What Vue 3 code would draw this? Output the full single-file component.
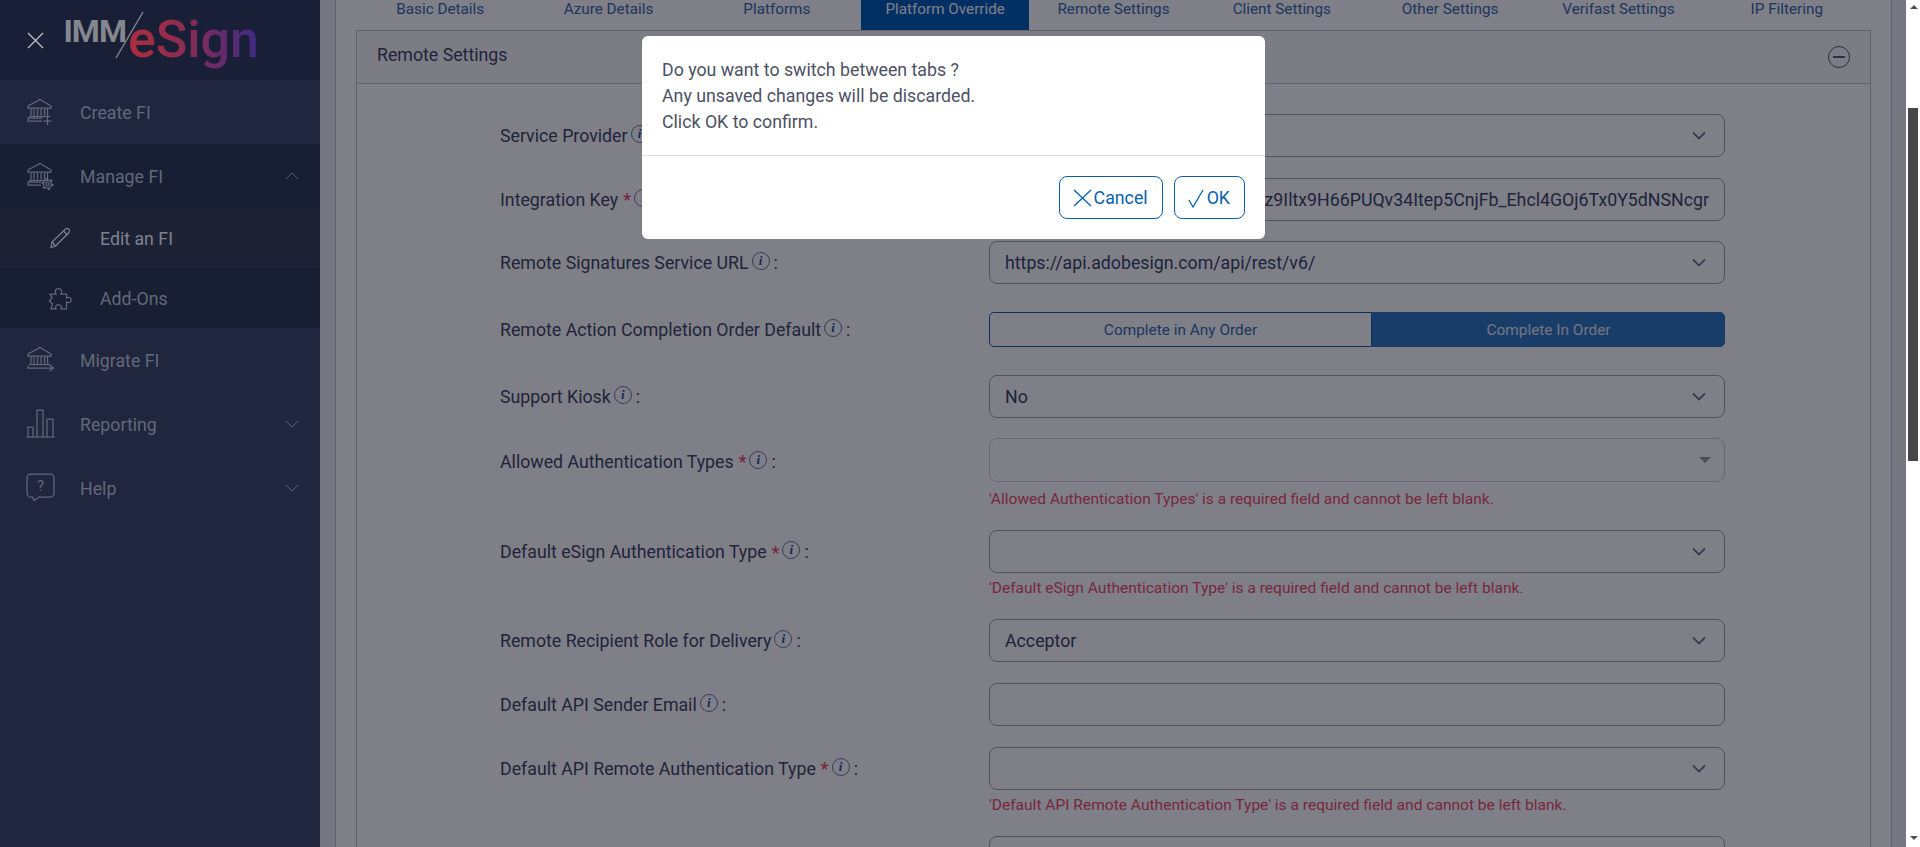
<template>
  <div class="page">
    <aside class="sidebar">
      <div class="brand">
        <svg class="close-icon" viewBox="0 0 17 17" fill="none" stroke="currentColor" stroke-width="1.3">
          <line x1="1" y1="1" x2="16" y2="16"></line>
          <line x1="16" y1="1" x2="1" y2="16"></line>
        </svg>
        <svg class="logo" viewBox="0 0 200 80" width="200" height="80">
          <defs>
            <linearGradient id="esignGrad" x1="0" y1="0" x2="1" y2="0">
              <stop offset="0" stop-color="#ad2d3e"></stop>
              <stop offset="0.45" stop-color="#8a2c52"></stop>
              <stop offset="1" stop-color="#3d2a86"></stop>
            </linearGradient>
          </defs>
          <text x="3.5" y="42" class="logo-imm">IMM</text>
          <line x1="83" y1="12" x2="56" y2="58" stroke="#85878f" stroke-width="1.4"></line>
          <text x="68" y="57" class="logo-esign" fill="url(#esignGrad)">eSign</text>
        </svg>
      </div>
      <nav>
        <a v-for="item in navItems" :key="item.label" class="nav-item" :class="item.cls">
          <svg :class="item.sub ? 'nav-icon-sub' : 'nav-icon'" :viewBox="item.sub ? '0 0 24 24' : '0 0 30 30'" fill="none" stroke="currentColor" stroke-width="1.25">
            <path v-for="d in item.icon" :key="d" :d="d"></path>
            <template v-if="item.label === 'Manage FI'">
              <circle cx="21.5" cy="23" r="4"></circle>
              <circle cx="21.5" cy="23" r="5.2" stroke-width="1.8" stroke-dasharray="2.2 3.2"></circle>
              <circle cx="21.5" cy="23" r="1.6"></circle>
            </template>
            <text v-if="item.label === 'Help'" x="14.5" y="18" class="help-mark">?</text>
          </svg>
          <span class="nav-label">{{ item.label }}</span>
          <svg v-if="item.caret" class="nav-caret" viewBox="0 0 14 8" fill="none" stroke="currentColor" stroke-width="1">
            <polyline :points="item.caret === 'up' ? '1 7 7 1 13 7' : '1 1 7 7 13 1'"></polyline>
          </svg>
        </a>
      </nav>
    </aside>

    <main class="main">
      <div class="outer">
        <div class="inner">
          <div class="tabs">
            <a v-for="tab in tabs" :key="tab" class="tab" :class="{ active: tab === 'Platform Override' }">{{ tab }}</a>
          </div>
          <section class="panel">
            <header class="panel-head">
              <span class="panel-title">Remote Settings</span>
              <span class="collapse"></span>
            </header>
            <div class="panel-body">
              <div v-for="row in rows" :key="row.key" class="row" :class="{ 'row-toggle': row.type === 'toggle' }">
                <label class="label">
                  <template v-if="row.label">
                    <span>{{ row.label }}</span>
                    <span v-if="row.req" class="req">*</span>
                    <span class="info">i</span>
                    <span class="colon">:</span>
                  </template>
                </label>
                <div v-if="row.type === 'toggle'" class="toggle">
                  <button class="toggle-btn">Complete in Any Order</button>
                  <button class="toggle-btn on">Complete In Order</button>
                </div>
                <div v-else class="field" :class="{ 'field-end': row.end, 'field-light': row.type === 'multi' }">
                  <span class="value">{{ row.value }}</span>
                  <svg v-if="row.type === 'select'" class="chev" viewBox="0 0 14 9" fill="none" stroke="currentColor" stroke-width="1.8">
                    <polyline points="1 1.5 7 7.5 13 1.5"></polyline>
                  </svg>
                  <span v-if="row.type === 'multi'" class="caret"></span>
                </div>
                <div v-if="row.err" class="err">{{ row.err }}</div>
              </div>
            </div>
          </section>
        </div>
      </div>
      <div class="overlay"></div>
    </main>

    <div class="scrollbar">
      <span class="arrow arrow-up"></span>
      <span class="thumb"></span>
      <span class="arrow arrow-down"></span>
    </div>

    <div class="modal">
      <div class="modal-body">
        <div>Do you want to switch between tabs ?</div>
        <div>Any unsaved changes will be discarded.</div>
        <div>Click OK to confirm.</div>
      </div>
      <div class="modal-foot">
        <button class="btn">
          <svg viewBox="0 0 20 18" width="20" height="18" fill="none" stroke="currentColor" stroke-width="1.3">
            <line x1="2" y1="1" x2="19" y2="17"></line>
            <line x1="19" y1="1" x2="2" y2="17"></line>
          </svg>
          <span>Cancel</span>
        </button>
        <button class="btn">
          <svg viewBox="0 0 18 20" width="18" height="20" fill="none" stroke="currentColor" stroke-width="1.3">
            <polyline points="2 12 6 19 16 2"></polyline>
          </svg>
          <span>OK</span>
        </button>
      </div>
    </div>
  </div>
</template>

<script setup>
const bank = [
  'M2 9 L14 2.5 L25 9 V11 H2 Z',
  'M5 12 V18.5 M8 12 V18.5 M11.5 12 V18.5 M15 12 V18.5 M18.5 12 V18.5 M21.5 12 V18.5',
  'M3 19.5 H24'
]

const navItems = [
  { label: 'Create FI', cls: 'lit', icon: [...bank, 'M16 21 H2 V24 H16', 'M21.5 20 V28 M17.5 24 H25.5'] },
  { label: 'Manage FI', cls: 'open', caret: 'up', icon: [...bank, 'M15 21 H2 V24 H15'] },
  {
    label: 'Edit an FI',
    cls: 'sub edit',
    sub: true,
    icon: ['M3 21.5 L4 16 L17.5 3 a2.5 2.5 0 0 1 3.5 3.5 L7.5 20 Z', 'M15.5 5 L19.5 9', 'M4 16 L7.5 20']
  },
  {
    label: 'Add-Ons',
    cls: 'sub addons',
    sub: true,
    icon: [
      'M2 8 H8 C6.5 5.5 7.5 2.5 10.5 2.5 S14.5 5.5 13 8 H18.5 V12 C20.5 10.5 23.2 11.5 23.2 14 S20.5 17.5 18.5 16 V22.8 H13 C14 20.5 12.8 18.5 10.5 18.5 S7 20.5 8 22.8 H3 L4.5 18 L1.5 15 L4 12 Z'
    ]
  },
  { label: 'Migrate FI', icon: [...bank, 'M2 21 V23 H27 M23.5 20 L27.5 23 L23.5 26'] },
  {
    label: 'Reporting',
    caret: 'down',
    icon: ['M2 28 V18 H7 V28', 'M11 28 V1 H17 V28', 'M21 28 V10 H27 V28', 'M0.5 28 H28.5']
  },
  {
    label: 'Help',
    caret: 'down',
    icon: ['M5 1 H24 a4 4 0 0 1 4 4 V20 a4 4 0 0 1 -4 4 H13 L8 27.5 L6.5 24 H5 a4 4 0 0 1 -4 -4 V5 a4 4 0 0 1 4 -4 Z']
  }
]

const tabs = [
  'Basic Details',
  'Azure Details',
  'Platforms',
  'Platform Override',
  'Remote Settings',
  'Client Settings',
  'Other Settings',
  'Verifast Settings',
  'IP Filtering'
]

const rows = [
  { key: 'provider', label: 'Service Provider', type: 'select' },
  { key: 'integration', label: 'Integration Key', req: true, type: 'input', end: true, value: 'z9Iltx9H66PUQv34Itep5CnjFb_Ehcl4GOj6Tx0Y5dNSNcgr' },
  { key: 'url', label: 'Remote Signatures Service URL', type: 'select', value: 'https://api.adobesign.com/api/rest/v6/' },
  { key: 'order', label: 'Remote Action Completion Order Default', type: 'toggle' },
  { key: 'kiosk', label: 'Support Kiosk', type: 'select', value: 'No' },
  {
    key: 'allowed',
    label: 'Allowed Authentication Types',
    req: true,
    type: 'multi',
    err: "'Allowed Authentication Types' is a required field and cannot be left blank."
  },
  {
    key: 'esign',
    label: 'Default eSign Authentication Type',
    req: true,
    type: 'select',
    err: "'Default eSign Authentication Type' is a required field and cannot be left blank."
  },
  { key: 'role', label: 'Remote Recipient Role for Delivery', type: 'select', value: 'Acceptor' },
  { key: 'email', label: 'Default API Sender Email', type: 'input' },
  {
    key: 'apiauth',
    label: 'Default API Remote Authentication Type',
    req: true,
    type: 'select',
    err: "'Default API Remote Authentication Type' is a required field and cannot be left blank."
  },
  // label of this row sits below the fold
  { key: 'next', type: 'select' }
]
</script>

<style>
html,
body {
  margin: 0;
  overflow: hidden;
}
</style>

<style scoped>
.page {
  display: flex;
  height: 847px;
  overflow: hidden;
  font-family: Roboto, "Liberation Sans", sans-serif;
  background: #fff;
}

.sidebar {
  width: 320px;
  flex: none;
  background: #20263d;
}

.brand {
  display: flex;
  align-items: center;
  height: 80px;
  padding-left: 27px;
  background: #181f36;
  color: #c0c2c8;
}

.close-icon {
  width: 17px;
  height: 17px;
  flex: none;
}

.logo {
  margin-left: 16px;
  flex: none;
}

.logo-imm {
  font-family: Roboto, sans-serif;
  font-size: 32px;
  font-weight: 700;
  letter-spacing: -1px;
  fill: #85878f;
}

.logo-esign {
  font-family: Roboto, sans-serif;
  font-size: 52px;
  font-weight: 500;
}

.nav-item {
  display: flex;
  align-items: center;
  height: 64px;
  padding-left: 26px;
  color: #62687a;
  font-size: 17.75px;
}

.nav-item.open {
  background: #181f35;
}

.nav-item.sub {
  height: 60px;
  padding-left: 48px;
}

.nav-item.edit {
  background: #1c2234;
  color: #7d8290;
}

.nav-item.addons {
  background: #191f33;
}

.nav-icon {
  width: 30px;
  height: 30px;
  flex: none;
  margin-right: 24px;
}

.nav-icon-sub {
  width: 24px;
  height: 24px;
  flex: none;
  margin-right: 28px;
}

.help-mark {
  font-size: 15px;
  font-family: Roboto, sans-serif;
  text-anchor: middle;
  fill: currentColor;
  stroke: none;
}

.nav-label {
  flex: 1;
  padding-top: 1px;
}

.nav-caret {
  width: 14px;
  height: 8px;
  margin-right: 21px;
  color: #5c6273;
}

.main {
  flex: 1;
  min-width: 0;
  position: relative;
  overflow: hidden;
  background: #fff;
}

.overlay {
  position: absolute;
  inset: 0;
  background: rgba(0, 0, 18, 0.5);
}

.outer {
  height: 100%;
  padding: 0 14px 0 15px;
  background: #ececf0;
}

.inner {
  height: 100%;
  padding: 0 20px;
  background: #fff;
  border-left: 1px solid #c4c4cc;
  border-right: 1px solid #c4c4cc;
}

.tabs {
  display: flex;
  height: 30px;
}

.tab {
  flex: 1;
  height: 30px;
  padding-bottom: 12px;
  box-sizing: border-box;
  line-height: 18px;
  text-align: center;
  font-size: 15.25px;
  color: #386da8;
}

.tab.active {
  background: #005eb4;
  color: #fff;
}

.panel {
  border: 1px solid #c4c4cc;
  border-bottom: 0;
}

.panel-head {
  display: flex;
  align-items: center;
  justify-content: space-between;
  height: 52px;
  padding: 0 20px 0 20px;
  background: #f8f8f8;
  border-bottom: 1px solid #c4c4cc;
  font-size: 17.75px;
  color: #434a60;
}

.panel-title {
  margin-bottom: 5px;
}

.collapse {
  position: relative;
  width: 22px;
  height: 22px;
  box-sizing: border-box;
  border: 1px solid #5c6172;
  border-radius: 50%;
}

.collapse::after {
  content: "";
  position: absolute;
  left: 4px;
  right: 4px;
  top: 9px;
  height: 2px;
  background: #5c6172;
}

.panel-body {
  padding: 30px 144px 0 143px;
}

.row {
  display: grid;
  grid-template-columns: 489px 736px;
  margin-bottom: 20.6px;
}

.row-toggle {
  padding-top: 7.5px;
  margin-bottom: 27.5px;
}

.label {
  display: flex;
  align-items: center;
  padding-top: 1px;
  font-size: 17.75px;
  color: #434a60;
  white-space: nowrap;
}

.req {
  margin-left: 5px;
  color: #e8455f;
  font-size: 18px;
}

.info {
  display: flex;
  align-items: center;
  justify-content: center;
  width: 18px;
  height: 18px;
  margin: -4px 0 0 3px;
  box-sizing: border-box;
  border: 1px solid #6b7b9c;
  border-radius: 50%;
  font-family: "Liberation Serif", serif;
  font-style: italic;
  font-weight: 700;
  font-size: 13px;
  color: #1f5aa0;
}

.colon {
  margin-left: 4px;
}

.field {
  display: flex;
  align-items: center;
  height: 43px;
  padding: 0 15px;
  box-sizing: border-box;
  background: #fff;
  border: 1px solid #a2a2b4;
  border-radius: 8px;
  overflow: hidden;
  font-size: 17.75px;
  color: #3c4860;
  white-space: nowrap;
}

.field-end {
  justify-content: flex-end;
}

.field-light {
  height: 44px;
  margin-bottom: 2px;
  border-color: #cfcfd8;
}

.value {
  flex: 1;
  padding-top: 1px;
  text-align: left;
}

.field-end .value {
  flex: none;
}

.chev {
  width: 14px;
  height: 9px;
  margin-right: 3px;
  flex: none;
  color: #747a8e;
}

.caret {
  width: 0;
  height: 0;
  margin-right: -2px;
  border: 6px solid transparent;
  border-top-color: #9a9aa8;
  border-bottom: 0;
}

.err {
  grid-column: 2;
  margin: 5px 0 0.4px;
  font-size: 15.55px;
  line-height: 20px;
  color: #ee5068;
}

.toggle {
  display: flex;
  height: 35px;
}

.toggle-btn {
  flex: 1;
  padding: 0;
  border: 1px solid #1f5fa5;
  background: #fff;
  font: inherit;
  font-size: 15.4px;
  color: #386da8;
  border-radius: 5px 0 0 5px;
}

.toggle-btn.on {
  flex: 0 0 353px;
  background: #327ac0;
  border-color: #327ac0;
  color: #e4eaf3;
  border-radius: 0 5px 5px 0;
}

.scrollbar {
  position: relative;
  width: 14px;
  flex: none;
  background: #fff;
}

.thumb {
  position: absolute;
  top: 108px;
  left: 2px;
  width: 10px;
  height: 353px;
  background: #474747;
}

.arrow {
  position: absolute;
  left: 4px;
  border: 4px solid transparent;
}

.arrow-up {
  top: 5px;
  border-bottom-color: #505050;
  border-top: 0;
}

.arrow-down {
  top: 836px;
  border-top-color: #505050;
  border-bottom: 0;
}

.modal {
  position: fixed;
  top: 36px;
  left: 642px;
  width: 623px;
  background: #fff;
  border-radius: 6px;
  font-size: 17.75px;
  color: #4c5163;
}

.modal-body {
  padding: 21px 20px 20px;
  line-height: 26px;
  border-bottom: 1px solid #dcdcdc;
}

.modal-foot {
  display: flex;
  justify-content: flex-end;
  gap: 11px;
  padding: 20px;
}

.btn {
  display: flex;
  align-items: center;
  gap: 2px;
  height: 43px;
  padding: 0 14px 0 12px;
  background: #fff;
  border: 1px solid #0a62ad;
  border-radius: 8px;
  font: inherit;
  color: #0a62ad;
}
</style>
